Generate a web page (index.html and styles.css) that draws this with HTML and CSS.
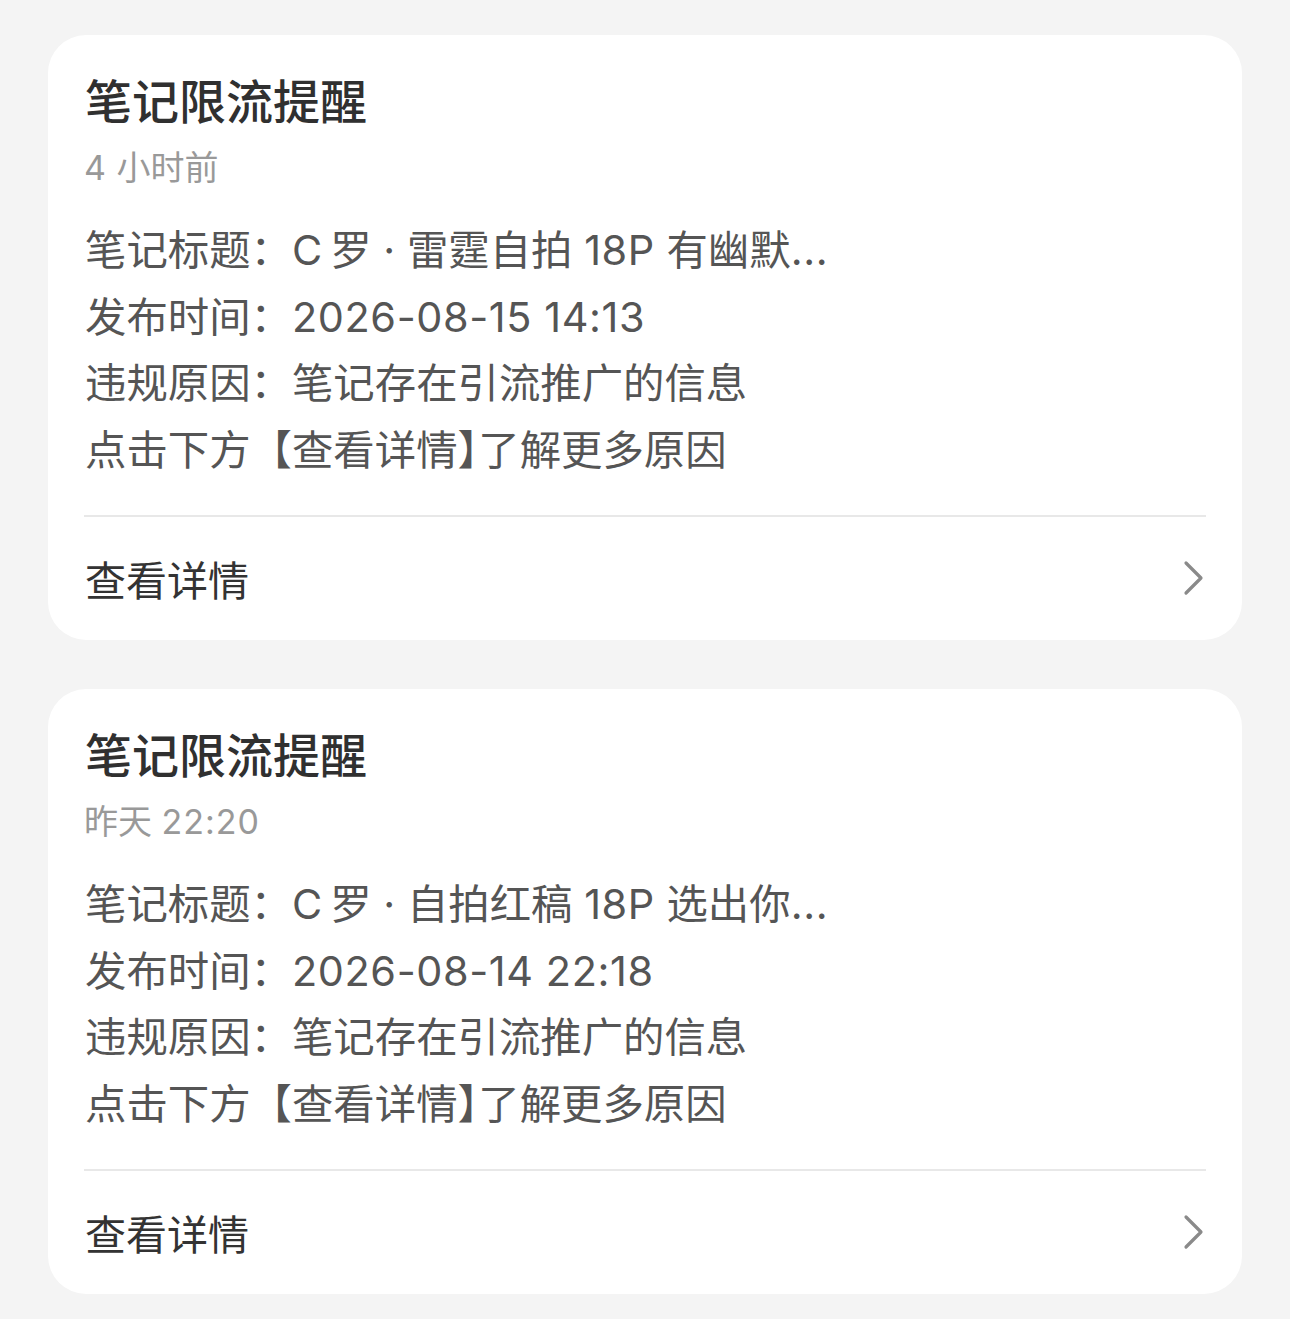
FILE: index.html
```html
<!DOCTYPE html>
<html lang="zh-CN">
<head>
<meta charset="utf-8">
<title>笔记限流提醒</title>
<link rel="stylesheet" href="styles.css">
</head>
<body>
<main class="list">
  <section class="card">
    <h2 class="title">笔记限流提醒</h2>
    <div class="time"><span class="num">4</span> 小时前</div>
    <div class="body">
      <p class="line">笔记标题：<span class="num">C</span>&#8201;罗 · 雷霆自拍 <span class="num">18P</span> 有幽默<span class="num">...</span></p>
      <p class="line">发布时间：<span class="num">2026-08-15 14:13</span></p>
      <p class="line">违规原因：笔记存在引流推广的信息</p>
      <p class="line">点击下方【查看详情<span class="halt">】</span>了解更多原因</p>
    </div>
    <div class="footer">
      <span class="more">查看详情</span>
      <svg class="chev" width="24" height="36" viewBox="0 0 24 36"><polyline points="4,3 19,18 4,33" fill="none" stroke="#8a8a8a" stroke-width="3.2" stroke-linecap="round" stroke-linejoin="round"/></svg>
    </div>
  </section>
  <section class="card">
    <h2 class="title">笔记限流提醒</h2>
    <div class="time">昨天 <span class="num">22:20</span></div>
    <div class="body">
      <p class="line">笔记标题：<span class="num">C</span>&#8201;罗 · 自拍红稿 <span class="num">18P</span> 选出你<span class="num">...</span></p>
      <p class="line">发布时间：<span class="num">2026-08-14 22:18</span></p>
      <p class="line">违规原因：笔记存在引流推广的信息</p>
      <p class="line">点击下方【查看详情<span class="halt">】</span>了解更多原因</p>
    </div>
    <div class="footer">
      <span class="more">查看详情</span>
      <svg class="chev" width="24" height="36" viewBox="0 0 24 36"><polyline points="4,3 19,18 4,33" fill="none" stroke="#8a8a8a" stroke-width="3.2" stroke-linecap="round" stroke-linejoin="round"/></svg>
    </div>
  </section>
</main>
</body>
</html>
```
FILE: styles.css
```css
html, body {
  margin: 0;
  padding: 0;
  background: #f4f4f4;
}
body {
  font-family: "Inter", "Noto Sans CJK SC", sans-serif;
  color: #333;
}
.list {
  display: flex;
  flex-direction: column;
  gap: 49px;
  padding: 35px 48px 0 48px;
}
.card {
  background: #fff;
  border-radius: 38px;
  padding: 34px 36px 0 36px;
  height: 605px;
  box-sizing: border-box;
}
.title {
  margin: 0;
  padding-left: 1px;
  font-size: 47px;
  line-height: 66px;
  font-weight: 500;
  color: #303030;
}
.time {
  padding-left: 0;
  font-size: 34px;
  line-height: 66px;
  color: #999;
}
.time .num {
  letter-spacing: 1px;
}
.body {
  margin-top: 16px;
  padding-left: 1px;
  padding-bottom: 32px;
  border-bottom: 2px solid #e8e8e8;
}
.line {
  margin: 0;
  font-size: 41.4px;
  line-height: 66.5px;
  color: #555;
  white-space: nowrap;
}
.num {
  letter-spacing: 0.6px;
}
.halt {
  font-feature-settings: "halt" 1;
}
.footer {
  height: 122px;
  display: flex;
  align-items: center;
  justify-content: space-between;
  padding-left: 1px;
}
.more {
  font-size: 41px;
  color: #333;
}
.chev {
  display: block;
  margin-right: 0;
}
```
